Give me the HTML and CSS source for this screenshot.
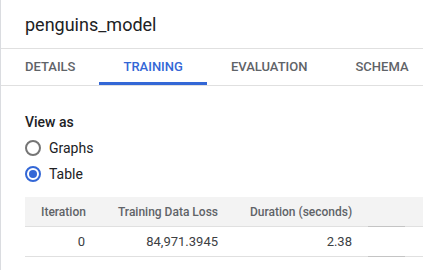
FILE: index.html
```html
<!DOCTYPE html>
<html lang="en">
<head>
    <meta charset="UTF-8">
    <meta name="viewport" content="width=device-width, initial-scale=1.0">
    <title>penguins_model</title>
    <link rel="stylesheet" href="styles.css">
</head>
<body>
    <div class="panel">
        <div class="title">penguins_model</div>
        <div class="tabs">
            <div class="tab">Details</div>
            <div class="tab active">Training</div>
            <div class="tab">Evaluation</div>
            <div class="tab">Schema</div>
        </div>
        <div class="content">
            <div class="view-label">View as</div>
            <label class="radio">
                <span class="circle"></span>
                Graphs
            </label>
            <label class="radio">
                <span class="circle checked"></span>
                Table
            </label>

            <table class="results">
                <colgroup>
                    <col class="c-iter">
                    <col class="c-loss">
                    <col class="c-dur">
                    <col class="c-handle">
                    <col>
                </colgroup>
                <thead>
                    <tr>
                        <th>Iteration</th>
                        <th>Training Data Loss</th>
                        <th>Duration (seconds)</th>
                        <th class="handle"></th>
                        <th></th>
                    </tr>
                </thead>
                <tbody>
                    <tr>
                        <td>0</td>
                        <td>84,971.3945</td>
                        <td>2.38</td>
                        <td class="handle"></td>
                        <td></td>
                    </tr>
                </tbody>
            </table>
        </div>
    </div>
</body>
</html>
```

FILE: styles.css
```css
body {
    margin: 0;
    font-family: Roboto, "Liberation Sans", sans-serif;
    color: #202124;
    background: #fff;
}
.panel {
    border-left: 1px solid #dadce0;
    height: 270px;
    overflow: hidden;
}
.title {
    height: 48px;
    line-height: 50px;
    padding-left: 24px;
    font-size: 18px;
    border-bottom: 1px solid #e0e0e0;
}
.tabs {
    display: flex;
    border-bottom: 1px solid #e0e0e0;
    white-space: nowrap;
}
.tab {
    height: 36px;
    line-height: 36px;
    padding: 0 24px;
    font-size: 13px;
    font-weight: 500;
    text-transform: uppercase;
    color: #5f6368;
    box-sizing: border-box;
}
.tab.active {
    color: #3367d6;
    border-bottom: 3px solid #3367d6;
}
.content {
    padding: 26px 0 0 24px;
}
.view-label {
    font-size: 14px;
    font-weight: 500;
    line-height: 20px;
    margin-bottom: 6px;
}
.radio {
    display: flex;
    align-items: center;
    gap: 8px;
    height: 20px;
    margin-bottom: 6px;
    font-size: 14px;
    color: #202124;
}
.circle {
    width: 16px;
    height: 16px;
    box-sizing: border-box;
    border: 2px solid #757575;
    border-radius: 50%;
    display: flex;
    align-items: center;
    justify-content: center;
}
.circle.checked {
    border-color: #3367d6;
}
.circle.checked::after {
    content: "";
    width: 8px;
    height: 8px;
    border-radius: 50%;
    background: #3367d6;
}
.results {
    margin-top: 13px;
    border-collapse: collapse;
    table-layout: fixed;
    width: 398px;
}
.c-iter { width: 76px; }
.c-loss { width: 133px; }
.c-dur { width: 134px; }
.c-handle { width: 37px; }
.results th, .results td {
    padding: 0 16px;
    text-align: right;
    white-space: nowrap;
    border-bottom: 1px solid #e0e0e0;
}
.results th {
    height: 29px;
    background: #f3f3f3;
    font-size: 12px;
    font-weight: 500;
    color: #5f6368;
}
.results td {
    height: 29px;
    font-size: 13px;
    color: #3c4043;
}
.results .handle {
    padding: 0;
    border-bottom-color: #c4c4c4;
}
```
